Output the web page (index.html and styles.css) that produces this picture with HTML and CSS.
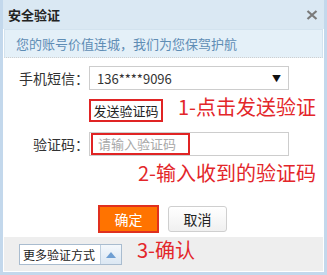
FILE: index.html
```html
<!DOCTYPE html>
<html lang="zh-CN">
<head>
  <meta charset="UTF-8" />
  <title>安全验证</title>
  <link rel="stylesheet" href="styles.css">
</head>
<body>
  <div class="dialog">
    <div class="title">
      <span>安全验证</span>
      <svg class="close" width="12" height="10" viewBox="0 0 12 10">
        <path d="M1.5 1 L10.5 9 M10.5 1 L1.5 9" stroke="#7a7a7a" stroke-width="2.2" fill="none"/>
      </svg>
    </div>
    <div class="notice">您的账号价值连城，我们为您保驾护航</div>

    <div class="content">
      <div class="row">
        <label class="lbl">手机短信：</label>
        <div class="select">
          <span>136****9096</span>
          <span class="arrow">▼</span>
        </div>
      </div>

      <div class="row send-row">
        <span class="lbl"></span>
        <button class="send mark">发送验证码</button>
        <span class="hint hint1">1-点击发送验证</span>
      </div>

      <div class="row code-row">
        <label class="lbl">验证码：</label>
        <div class="input">
          <span class="ph mark">请输入验证码</span>
        </div>
      </div>

      <div class="hint hint2">2-输入收到的验证码</div>

      <div class="row btn-row">
        <span class="lbl"></span>
        <button class="ok">确定</button>
        <button class="cancel">取消</button>
      </div>
    </div>

    <div class="footer">
      <div class="more">
        <span class="more-text">更多验证方式</span>
        <span class="more-btn">
          <svg width="10" height="6" viewBox="0 0 10 6"><path d="M0 6 L5 0 L10 6 Z" fill="#6f9fd3"/></svg>
        </span>
      </div>
      <span class="hint hint3">3-确认</span>
    </div>
  </div>
</body>
</html>
```

FILE: styles.css
```css
body {
  margin: 0;
  font-family: "Noto Sans CJK SC", "Liberation Sans", sans-serif;
  color: #333;
}
.dialog {
  width: 327px;
  height: 275px;
  box-sizing: border-box;
  border: 3px solid #c3d8ec;
  border-top: none;
  background: #fff;
  display: flex;
  flex-direction: column;
}
.title {
  height: 29px;
  flex: none;
  background: #dae8f3;
  display: flex;
  align-items: center;
  justify-content: space-between;
  padding: 0 6px 0 5px;
  font-size: 13px;
  font-weight: bold;
  color: #222;
}
.close {
  margin-top: 1px;
}
.notice {
  flex: none;
  margin: 0 1px;
  background: #e4f0f8;
  border: 1px solid #d3e3ef;
  border-bottom: 1px dotted #cfcfcf;
  box-sizing: border-box;
  height: 29px;
  padding-left: 11px;
  font-size: 13px;
  line-height: 27px;
  color: #5f8db5;
}
.content {
  flex: 1;
  padding-top: 8px;
}
.row {
  display: flex;
  align-items: center;
}
.lbl {
  width: 86px;
  flex: none;
  text-align: right;
  font-size: 14px;
  color: #333;
}
.select, .input {
  width: 200px;
  height: 24px;
  box-sizing: border-box;
  border: 1px solid #cdcdcd;
  display: flex;
  align-items: center;
  justify-content: space-between;
  padding: 0 7px 0 7px;
  font-size: 13px;
  color: #333;
}
.arrow {
  font-size: 9px;
  color: #111;
}
.send-row {
  margin-top: 9px;
  align-items: flex-start;
}
.mark {
  outline: 2px solid #e02424;
  outline-offset: -2px;
}
.send {
  height: 23px;
  width: 74px;
  padding: 0;
  border: 1px solid #c6c6c6;
  background: #fff;
  font-family: inherit;
  font-size: 13px;
  color: #222;
}
.hint {
  color: #e3262a;
  font-size: 20px;
  line-height: 1;
}
.hint1 {
  margin: -2px 0 0 15px;
}
.code-row {
  margin-top: 10px;
}
.input {
  padding: 1px;
}
.ph {
  width: 99px;
  height: 22px;
  box-sizing: border-box;
  padding-left: 7px;
  font-size: 13px;
  line-height: 21px;
  color: #a9a9a9;
}
.hint2 {
  margin: 7px 0 0 135px;
}
.btn-row {
  margin-top: 22px;
  gap: 9px;
}
.ok {
  width: 61px;
  height: 28px;
  border: 2px solid #e0301e;
  background: #ff7300;
  color: #fff;
  font-family: inherit;
  font-size: 14px;
  padding: 0;
}
.cancel {
  width: 59px;
  height: 26px;
  border: 1px solid #cfcfcf;
  border-radius: 3px;
  background: linear-gradient(#ffffff, #f0f0f0);
  color: #222;
  font-family: inherit;
  font-size: 14px;
  padding: 0;
}
.footer {
  height: 35px;
  flex: none;
  box-sizing: border-box;
  background: #eeeeee;
  border: 1px solid #fff;
  border-top: none;
  display: flex;
  align-items: center;
  padding-left: 15px;
}
.more {
  width: 103px;
  height: 21px;
  box-sizing: border-box;
  border: 1px solid #a9bccf;
  background: #fff;
  display: flex;
  align-items: stretch;
  font-size: 12px;
  margin-top: 1px;
}
.more-text {
  flex: 1;
  padding-left: 3px;
  line-height: 19px;
  white-space: nowrap;
  overflow: hidden;
  color: #222;
}
.more-btn {
  width: 20px;
  flex: none;
  border-left: 1px solid #bfd0e0;
  background: linear-gradient(#f4f8fc, #dbe7f3);
  display: flex;
  align-items: center;
  justify-content: center;
}
.hint3 {
  margin: -9px 0 0 15px;
}
```
